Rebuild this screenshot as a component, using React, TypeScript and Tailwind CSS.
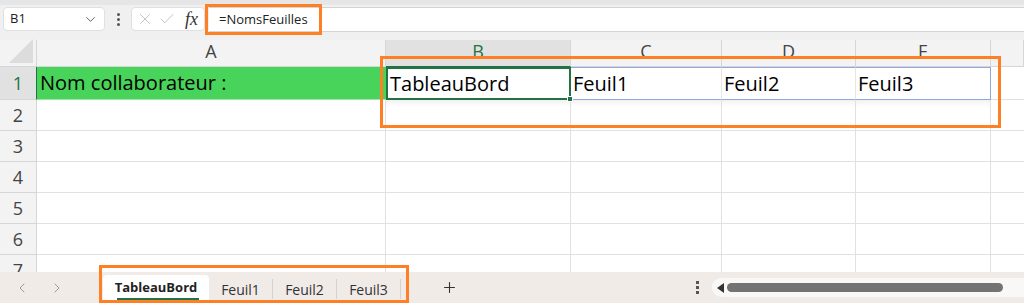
import { ChevronDown, ChevronLeft, ChevronRight, X, Check, Plus } from 'lucide-react';

const cols = ['A', 'B', 'C', 'D', 'E', ''];
const rowNums = [2, 3, 4, 5, 6, 7];

export default function App() {
  return (
    <div className="relative w-[1024px] h-[303px] overflow-hidden bg-white" style={{ fontFamily: '"Open Sans", "Liberation Sans", sans-serif' }}>
      {/* formula bar */}
      <div className="h-[40px] bg-[#f0f0f0] border-t-[5px] border-[#e6e6e6] flex items-start pt-[2px] pl-[3px] gap-[4px]">
        <div className="w-[102px] h-[24px] bg-white rounded-[4px] border border-[#e0e0e0] flex items-center justify-between px-[6px] text-[13px] text-[#222]">
          <span>B1</span>
          <ChevronDown size={15} strokeWidth={1.5} className="text-[#555]" />
        </div>
        <div className="w-[18px] h-[24px] flex flex-col items-center justify-center gap-[2px]">
          <span className="w-[3px] h-[3px] bg-[#555] rounded-full" />
          <span className="w-[3px] h-[3px] bg-[#555] rounded-full" />
          <span className="w-[3px] h-[3px] bg-[#555] rounded-full" />
        </div>
        <div className="w-[74px] h-[24px] bg-white rounded-[4px] border border-[#e0e0e0] flex items-center gap-[4px] px-[4px]">
          <X size={18} strokeWidth={1} className="text-[#b0b0b0]" />
          <Check size={18} strokeWidth={1} className="text-[#b0b0b0]" />
          <span className="ml-[5px] text-[18px] italic text-[#333]" style={{ fontFamily: '"Liberation Serif", serif' }}>fx</span>
        </div>
        <div className="flex-1 h-[25px] bg-white border-y border-[#d4d4d4] flex items-center pl-[10px] text-[13px] text-[#222]">
          =NomsFeuilles
        </div>
      </div>

      {/* grid */}
      <div className="grid grid-cols-[37px_349px_185px_151px_134px_135px_1fr] grid-rows-[27px_33px_31px_31px_31px_31px_31px_31px]">
        <div className="bg-[#f3f3f3] border-r border-b border-[#d6d6d6] relative">
          <div className="absolute right-[3px] bottom-[3px] w-0 h-0 border-l-[24px] border-l-transparent border-b-[24px] border-b-[#dcdcdc]" />
        </div>
        {cols.map((c, i) => (
          <div
            key={'h' + i}
            className={`border-r border-b border-[#d6d6d6] flex items-end justify-center pb-[1px] text-[18px] ${
              c === 'B' ? 'bg-[#e1e1e1] text-[#217346] border-b-[#217346]' : 'bg-[#f3f3f3] text-[#444]'
            }`}
          >
            {c}
          </div>
        ))}

        {/* row 1 */}
        <div className="bg-[#e1e1e1] border-r border-r-[#217346] border-b border-[#d6d6d6] flex items-center justify-center text-[18px] text-[#217346]">1</div>
        <div className="bg-[#48d35a] border-b border-[#9fe3a8] flex items-center pl-[3px] text-[20px] text-black">Nom collaborateur :</div>
        <div className="relative border-[2px] border-[#217346] flex items-center pl-[2px] text-[20px] text-black">
          TableauBord
          <span className="absolute -right-[4px] -bottom-[4px] w-[6px] h-[6px] bg-[#217346] border border-white" />
        </div>
        <div className="border-y border-[#8fa9dc] border-r border-r-[#e6e6e6] flex items-center pl-[2px] text-[20px] text-black">Feuil1</div>
        <div className="border-y border-[#8fa9dc] border-r border-r-[#e6e6e6] flex items-center pl-[2px] text-[20px] text-black">Feuil2</div>
        <div className="border-y border-r border-[#8fa9dc] flex items-center pl-[2px] text-[20px] text-black">Feuil3</div>
        <div className="border-b border-[#e1e1e1]" />

        {rowNums.map((r) => (
          <>
            <div key={'r' + r} className="bg-[#f3f3f3] border-r border-b border-[#d6d6d6] flex items-center justify-center text-[18px] text-[#444]">
              {r}
            </div>
            {cols.map((_, i) => (
              <div key={r + '-' + i} className={`border-b border-[#e1e1e1] ${i < 5 ? 'border-r' : ''} ${r === 2 && i > 0 && i < 5 ? 'shadow-[inset_0_6px_6px_-4px_rgba(0,0,0,0.08)]' : ''}`} />
            ))}
          </>
        ))}
      </div>

      {/* sheet tabs */}
      <div className="absolute left-0 right-0 bottom-0 h-[31px] bg-[#f1ebe8] flex items-stretch">
        <div className="w-[103px] flex items-center gap-[19px] pl-[14px] text-[#9a9a9a]">
          <ChevronLeft size={16} strokeWidth={1.5} />
          <ChevronRight size={16} strokeWidth={1.5} />
        </div>
        <div className="flex items-stretch pt-[3px] text-[14px] text-[#333]">
          <div className="w-[106px] bg-white rounded-t-[4px] flex items-center justify-center pb-[2px] relative font-bold text-[13px] text-[#222]">
            <span>TableauBord</span>
            <span className="absolute left-[14px] right-[10px] bottom-[3px] h-[2px] bg-[#217346]" />
          </div>
          <div className="w-[64px] flex items-center justify-center border-r border-[#d8d2cf] my-[4px]">Feuil1</div>
          <div className="w-[64px] flex items-center justify-center border-r border-[#d8d2cf] my-[4px]">Feuil2</div>
          <div className="w-[64px] flex items-center justify-center border-r border-[#d8d2cf] my-[4px]">Feuil3</div>
        </div>
        <div className="w-[96px] flex items-center justify-center text-[#333]">
          <Plus size={17} strokeWidth={1.5} />
        </div>
        <div className="flex-1" />
        <div className="w-[30px] flex flex-col items-center justify-center gap-[2px]">
          <span className="w-[3px] h-[3px] bg-[#555]" />
          <span className="w-[3px] h-[3px] bg-[#555]" />
          <span className="w-[3px] h-[3px] bg-[#555]" />
        </div>
        <div className="w-[312px] my-[6px] bg-[#faf8f7] rounded-l-full flex items-center pl-[5px] gap-[3px]">
          <span className="w-0 h-0 border-y-[5px] border-y-transparent border-r-[7px] border-r-[#333]" />
          <span className="w-[276px] h-[9px] rounded-full bg-[#737373]" />
        </div>
      </div>

      {/* orange annotation boxes */}
      <div className="absolute left-[205px] top-[4px] w-[117px] h-[31px] border-[3px] border-[#ff7f27]" />
      <div className="absolute left-[380px] top-[56px] w-[621px] h-[72px] border-[3px] border-[#ff7f27]" />
      <div className="absolute left-[99px] top-[265px] w-[310px] h-[38px] border-[3px] border-[#ff7f27]" />
    </div>
  );
}
